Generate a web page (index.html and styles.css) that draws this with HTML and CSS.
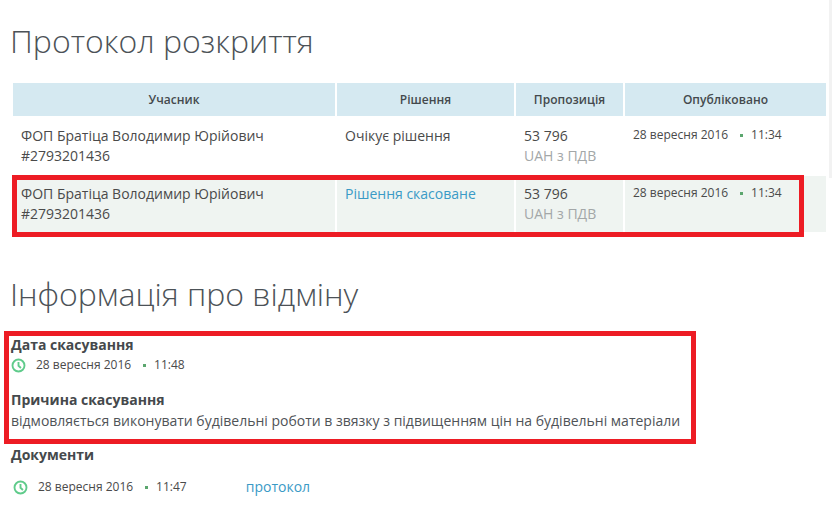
FILE: index.html
```html
<!DOCTYPE html>
<html lang="uk">
<head>
<meta charset="utf-8">
<title>Протокол розкриття</title>
<link rel="stylesheet" href="styles.css">
</head>
<body>
<main class="page">
  <h1 class="title first">Протокол розкриття</h1>
  <div class="table">
    <div class="row head">
      <div class="cell">Учасник</div><div class="cell">Рішення</div><div class="cell">Пропозиція</div><div class="cell">Опубліковано</div>
    </div>
    <div class="row body-row">
      <div class="cell">ФОП Братіца Володимир Юрійович<br>#2793201436</div>
      <div class="cell">Очікує рішення</div>
      <div class="cell">53 796<br><span class="muted">UAH з ПДВ</span></div>
      <div class="cell date-cell"><span class="stamp">28 вересня 2016<i class="dot"></i>11:34</span></div>
    </div>
    <div class="row body-row alt">
      <div class="cell">ФОП Братіца Володимир Юрійович<br>#2793201436</div>
      <div class="cell"><a class="link" href="#">Рішення скасоване</a></div>
      <div class="cell">53 796<br><span class="muted">UAH з ПДВ</span></div>
      <div class="cell date-cell"><span class="stamp">28 вересня 2016<i class="dot"></i>11:34</span></div>
    </div>
    <div class="mark mark-row"></div>
  </div>

  <h2 class="title second">Інформація про відміну</h2>
  <section class="info">
    <div class="mark mark-info"></div>
    <h3 class="label">Дата скасування</h3>
    <div class="when">
      <svg class="clock" viewBox="0 0 16 16" width="15" height="15"><circle cx="8" cy="8" r="6.4"/><path d="M8 4.2V8.3L10.6 10.6"/></svg>
      <span class="stamp">28 вересня 2016<i class="dot"></i>11:48</span>
    </div>
    <h3 class="label reason">Причина скасування</h3>
    <p class="text">відмовляється виконувати будівельні роботи в звязку з підвищенням цін на будівельні матеріали</p>
    <h3 class="label docs">Документи</h3>
    <div class="doc">
      <div class="when">
        <svg class="clock" viewBox="0 0 16 16" width="15" height="15"><circle cx="8" cy="8" r="6.4"/><path d="M8 4.2V8.3L10.6 10.6"/></svg>
        <span class="stamp">28 вересня 2016<i class="dot"></i>11:47</span>
      </div>
      <a class="link" href="#">протокол</a>
    </div>
  </section>
</main>
<div class="edge"></div>
</body>
</html>
```
FILE: styles.css
```css
html, body { margin: 0; padding: 0; background: #fff; }
body { width: 832px; height: 516px; overflow: hidden; position: relative; font-family: "Open Sans", sans-serif; font-size: 14px; line-height: 20px; color: #4a4a4a; }
.page { padding: 0 0 0 10px; }
.title { margin: 0; font-weight: 300; font-size: 32px; line-height: 44px; color: #4c5257; }
.first { padding-top: 19px; }
.second { margin-top: 40px; }
.table { position: relative; margin: 20px 0 0 3px; width: 813px; }
.row { display: grid; grid-template-columns: 322px 177px 107px 201px; column-gap: 2px; }
.head .cell { height: 33px; line-height: 33px; background: #d5e9f1; text-align: center; font-size: 12px; font-weight: 600; letter-spacing: .03px; color: #44494d; }
.body-row .cell { padding: 10px 8px 0; height: 50px; }
.body-row.alt .cell { padding-top: 8px; height: 48px; background: #eff4f1; }
.muted { color: #a3a7a8; }
.link { color: #3a9ac6; text-decoration: none; }
.stamp { font-size: 12px; line-height: 18px; display: inline-flex; align-items: center; }
.date-cell .stamp { display: flex; }
.dot { width: 3px; height: 3px; margin: 0 8px 0 12px; background: #5ba66e; display: inline-block; }
.mark { position: absolute; border: 5px solid #ed1c24; box-sizing: border-box; pointer-events: none; }
.mark-row { left: -1px; top: 92px; width: 792px; height: 62px; }
.info { position: relative; margin-top: 19px; padding-left: 1px; }
.mark-info { left: -6px; top: -4px; width: 692px; height: 113px; }
.label { margin: 0; font-size: 14px; line-height: 20px; font-weight: 700; color: #45494c; }
.when { display: flex; align-items: center; height: 20px; }
.clock { fill: none; stroke: #5fcb8b; stroke-width: 2; margin-right: 10px; flex: none; }
.reason { margin-top: 15px; }
.text { margin: 1px 0 0; line-height: 20px; color: #4f5357; }
.docs { margin-top: 14px; }
.doc { display: flex; align-items: center; margin: 12px 0 0 2px; }
.doc .link { margin-left: 59px; }
.edge { position: absolute; right: 0; top: 0; width: 3px; height: 178px; background: #f2f2f2; }
```
